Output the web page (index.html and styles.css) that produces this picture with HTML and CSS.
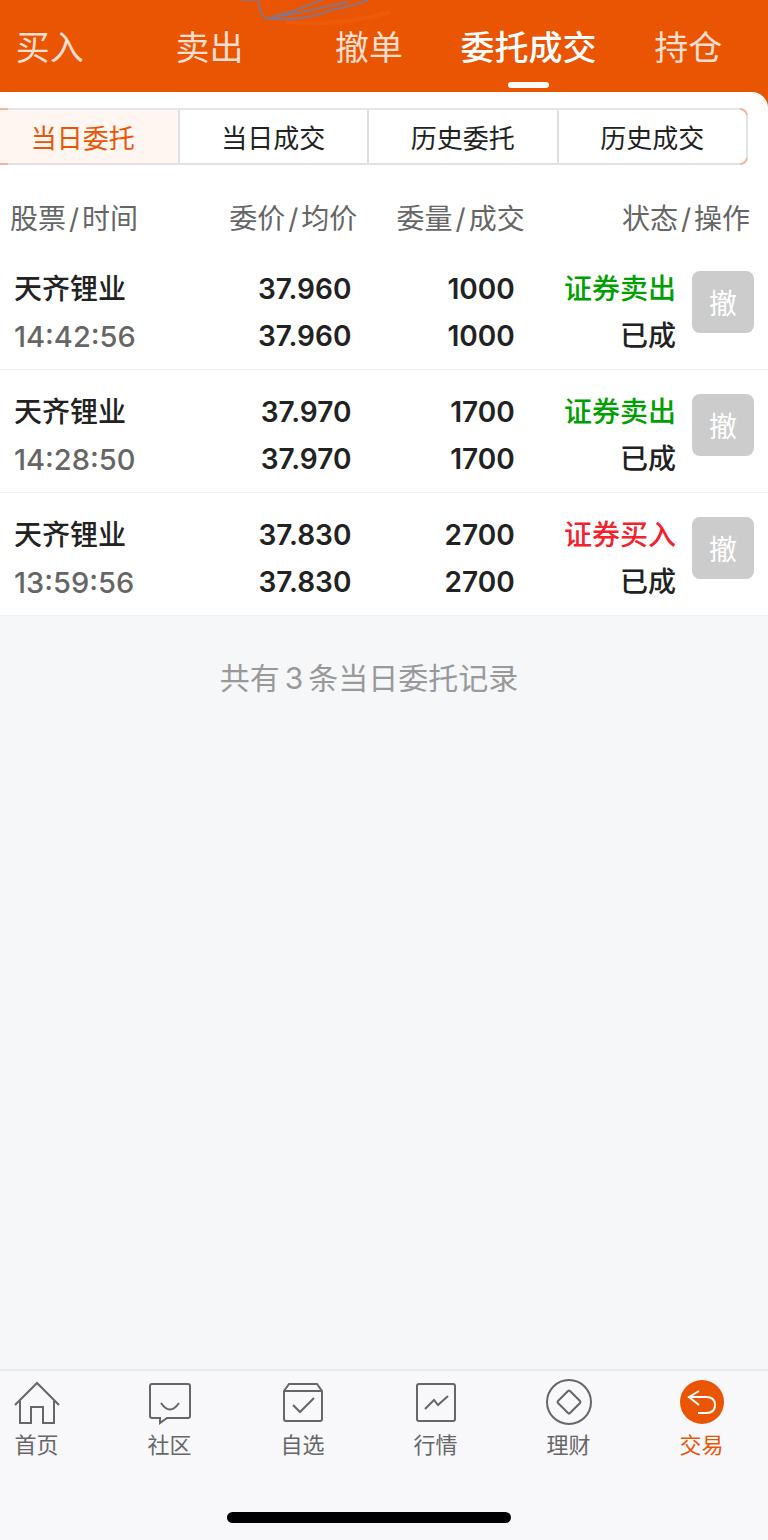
FILE: index.html
```html
<!DOCTYPE html>
<html lang="zh-CN">
<head>
    <meta charset="UTF-8">
    <meta name="viewport" content="width=device-width, initial-scale=1.0">
    <title>委托成交</title>
    <link rel="stylesheet" href="styles.css">
</head>
<body>
    <header class="header">
        <svg class="scribble" width="160" height="30" viewBox="0 0 160 30" fill="none" aria-hidden="true">
            <path class="smudge" d="M46 22Q100 27 150 12"/>
            <path d="M1 0H15M18 0Q20 14 24 17Q26 19 34 18Q62 22 91 10Q110 7 128 0M32 17Q58 10 82 0M32 17Q64 13 92 5Q102 4 108 1M26 19H43"/>
        </svg>
        <nav class="tabs">
            <button type="button">买入</button>
            <button type="button">卖出</button>
            <button type="button">撤单</button>
            <button type="button" class="active">委托成交</button>
            <button type="button">持仓</button>
        </nav>
    </header>

    <main class="main">
        <div class="panel-wrap">
            <section class="panel">
                <!-- 委托/成交切换 -->
                <div class="segment">
                    <button type="button" class="active">当日委托</button>
                    <button type="button">当日成交</button>
                    <button type="button">历史委托</button>
                    <button type="button">历史成交</button>
                </div>

                <table class="orders">
                    <colgroup>
                        <col class="col-name">
                        <col class="col-price">
                        <col class="col-amount">
                        <col class="col-status">
                        <col class="col-action">
                    </colgroup>
                    <thead>
                        <tr>
                            <th>股票<i>/</i>时间</th>
                            <th>委价<i>/</i>均价</th>
                            <th>委量<i>/</i>成交</th>
                            <th colspan="2">状态<i>/</i>操作</th>
                        </tr>
                    </thead>
                    <tbody>
                        <tr>
                            <td><div>天齐锂业</div><div class="time">14:42:56</div></td>
                            <td class="num"><div>37.960</div><div>37.960</div></td>
                            <td class="num"><div>1000</div><div>1000</div></td>
                            <td><div class="sell">证券卖出</div><div>已成</div></td>
                            <td><button type="button" class="cancel" disabled>撤</button></td>
                        </tr>
                        <tr>
                            <td><div>天齐锂业</div><div class="time">14:28:50</div></td>
                            <td class="num"><div>37.970</div><div>37.970</div></td>
                            <td class="num"><div>1700</div><div>1700</div></td>
                            <td><div class="sell">证券卖出</div><div>已成</div></td>
                            <td><button type="button" class="cancel" disabled>撤</button></td>
                        </tr>
                        <tr>
                            <td><div>天齐锂业</div><div class="time">13:59:56</div></td>
                            <td class="num"><div>37.830</div><div>37.830</div></td>
                            <td class="num"><div>2700</div><div>2700</div></td>
                            <td><div class="buy">证券买入</div><div>已成</div></td>
                            <td><button type="button" class="cancel" disabled>撤</button></td>
                        </tr>
                    </tbody>
                </table>
            </section>
        </div>
        <p class="summary">共有<span>3</span>条当日委托记录</p>
    </main>

    <!-- 底部导航 -->
    <footer class="footer">
        <nav class="tabbar">
            <a href="#">
                <svg viewBox="0 0 46 46"><path d="M1 25L23 3L45 25M6 21V43H17V27H29V43H40V21"/></svg>
                首页
            </a>
            <a href="#">
                <svg viewBox="0 0 46 46"><path d="M5 4H41Q43 4 43 6V36Q43 38 41 38H20L13 43V38H5Q3 38 3 36V6Q3 4 5 4ZM14 23Q23 36 32 23"/></svg>
                社区
            </a>
            <a href="#">
                <svg viewBox="0 0 46 46"><path d="M4 11L9 4H37L42 11V39Q42 41 40 41H6Q4 41 4 39ZM4 11H42M13 25L20 32L34 18"/></svg>
                自选
            </a>
            <a href="#">
                <svg viewBox="0 0 46 46"><path d="M6 4H40Q42 4 42 6V39Q42 41 40 41H6Q4 41 4 39V6Q4 4 6 4ZM12 29L21 20L25 25L35 16"/></svg>
                行情
            </a>
            <a href="#">
                <svg viewBox="0 0 46 46"><circle cx="23" cy="22" r="22"/><path d="M22 11Q23 10 24 11L34 21Q35 22 34 23L24 33Q23 34 22 33L12 23Q11 22 12 21Z"/></svg>
                理财
            </a>
            <a href="#" class="active">
                <svg viewBox="0 0 46 46"><circle class="disc" cx="23" cy="22" r="22"/><path class="arrow" d="M20 11L10 17L20 25M10 17H27Q36 17 36 25T27 33H19"/></svg>
                交易
            </a>
        </nav>
        <div class="home-bar"></div>
    </footer>
</body>
</html>
```
FILE: styles.css
```css
* {
    box-sizing: border-box;
}

body {
    margin: 0;
    min-height: 100vh;
    display: flex;
    flex-direction: column;
    overflow-x: hidden;
    font-family: Inter, "Noto Sans CJK SC", sans-serif;
    color: #222;
    background-color: #f6f7f9;
}

button {
    padding: 0;
    border: none;
    background: none;
    font-family: inherit;
    color: inherit;
}

.header {
    position: relative;
    background-color: #ea5504;
}

.scribble {
    position: absolute;
    top: 0;
    left: 240px;
    stroke: #8a7484;
    stroke-width: 2;
}

.smudge {
    stroke: #ec5a0a;
    stroke-width: 4;
}

/* 左侧超出屏幕30px */
.tabs, .tabbar, .home-bar {
    margin-left: -30px;
}

.tabs {
    position: relative;
    display: grid;
    grid-template-columns: repeat(5, 1fr);
}

.tabs button {
    height: 92px;
    display: flex;
    flex-direction: column;
    align-items: center;
    padding-top: 23px;
    font-size: 34px;
    line-height: 50px;
    color: #fcdfce;
}

.tabs .active {
    font-weight: 500;
    color: #fff;
}

.tabs .active::after {
    content: "";
    width: 41px;
    height: 6px;
    margin-top: 9px;
    border-radius: 3px;
    background-color: #fff;
}

.main {
    flex: 1;
}

.panel-wrap {
    background-color: #ea5504;
}

.panel {
    padding-top: 16px;
    border-top-right-radius: 16px;
    background-color: #fff;
}

.segment {
    position: relative;
    display: grid;
    grid-template-columns: repeat(4, 1fr);
    margin: 0 20px 0 -14px;
    border: 2px solid #f3b497;
    border-radius: 8px;
}

/* 灰色边线盖住橙色边框，只露出圆角 */
.segment::after {
    content: "";
    position: absolute;
    inset: -2px;
    pointer-events: none;
    background:
        linear-gradient(#e4e7ea, #e4e7ea) top left 22px / calc(100% - 30px) 2px no-repeat,
        linear-gradient(#dfe2e6, #dfe2e6) bottom left 22px / calc(100% - 30px) 2px no-repeat,
        linear-gradient(#dfe2e6, #dfe2e6) center right / 2px calc(100% - 14px) no-repeat;
}

.segment button {
    height: 53px;
    font-size: 26px;
    border-left: 2px solid #dcdfe3;
}

.segment .active {
    border-left: none;
    color: #ea5504;
    background-color: #fff5f1;
}

.orders {
    width: 100%;
    table-layout: fixed;
    border-collapse: collapse;
    text-align: right;
}

.col-name {
    width: 25%;
}

.col-price, .col-amount, .col-status {
    width: 22%;
}

.col-action {
    width: 10%;
}

.orders th {
    height: 82px;
    padding: 26px 0 0;
    font-size: 28px;
    font-weight: 400;
    line-height: 56px;
    vertical-align: top;
    text-align: right;
    color: #666;
}

.orders th i {
    margin: 0 3px;
    font-style: normal;
}

.orders th:first-child {
    padding-left: 10px;
    text-align: left;
}

.orders th:last-child {
    padding-right: 18px;
}

.orders td {
    padding: 19px 10px 9px 0;
    border-bottom: 1px solid #f0f1f2;
    font-size: 28px;
    font-weight: 500;
    line-height: 47px;
    vertical-align: top;
}

.orders td:first-child {
    padding-left: 14px;
    text-align: left;
}

.orders td:nth-child(2) {
    padding-right: 6px;
}

.orders td:nth-child(4) {
    padding-right: 16px;
}

.orders td:last-child {
    padding-right: 14px;
}

.orders .num {
    font-weight: 600;
}

.orders .time {
    font-size: 29px;
    color: #666;
}

.sell {
    color: #00a000;
}

.buy {
    color: #f5222d;
}

.cancel {
    display: block;
    width: 62px;
    height: 62px;
    margin-left: auto;
    margin-top: 5px;
    border-radius: 8px;
    font-size: 28px;
    color: #fff;
    background-color: #ccc;
}

.summary {
    margin: 41px 0 0 -30px;
    font-size: 30px;
    line-height: 42px;
    text-align: center;
    color: #999;
}

.summary span {
    margin: 0 5px;
}

.footer {
    border-top: 2px solid #e8eaec;
    background-color: #f8f8fb;
}

.tabbar {
    display: grid;
    grid-template-columns: repeat(6, 1fr);
}

.tabbar a {
    display: flex;
    flex-direction: column;
    align-items: center;
    padding-top: 9px;
    font-size: 22px;
    line-height: 38px;
    color: #666;
    text-decoration: none;
}

.tabbar svg {
    width: 46px;
    height: 46px;
    overflow: visible;
    fill: none;
    stroke: #666;
    stroke-width: 2;
}

.tabbar .active {
    color: #ea5504;
}

.tabbar .disc {
    fill: #ea5504;
    stroke: none;
}

.tabbar .arrow {
    stroke: #fff;
}

.home-bar {
    display: flex;
    justify-content: center;
    padding: 48px 0 17px;
}

.home-bar::after {
    content: "";
    width: 284px;
    height: 11px;
    border-radius: 6px;
    background-color: #000;
}
```
